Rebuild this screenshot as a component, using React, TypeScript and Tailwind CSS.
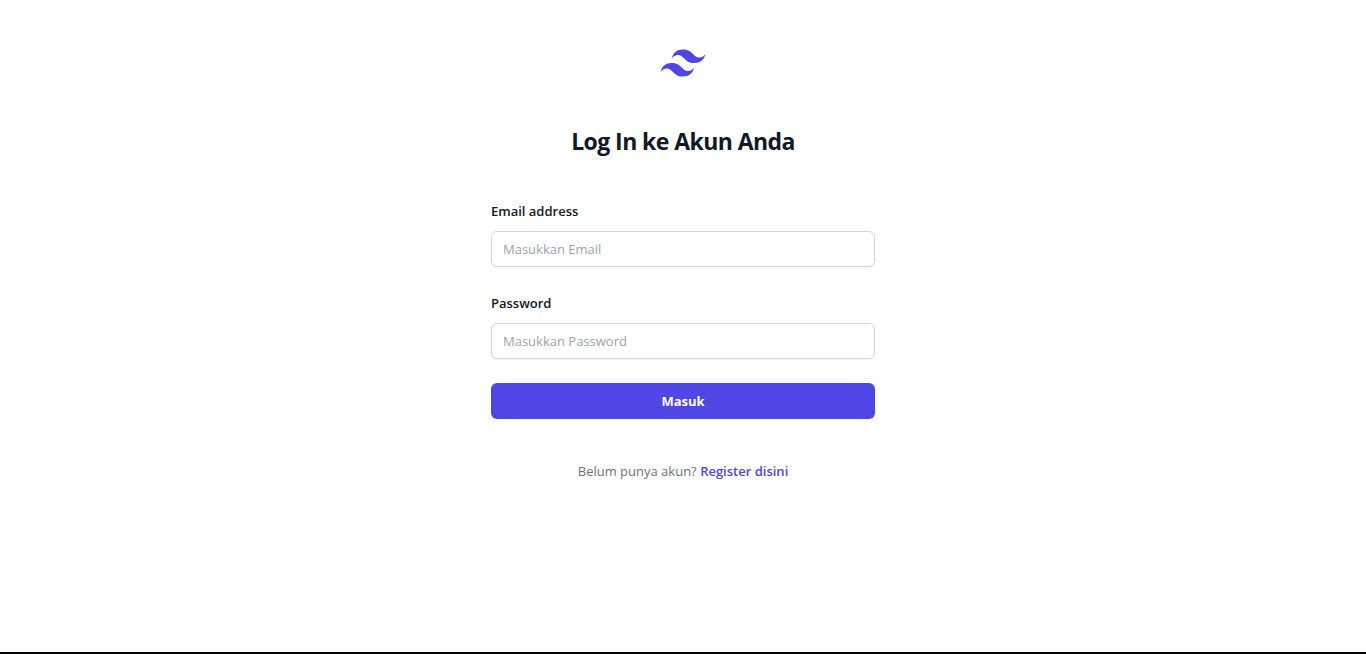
import React from 'react';

type FieldProps = { id: string; label: string; type: string; placeholder: string };

function Field({ id, label, type, placeholder }: FieldProps) {
  return (
    <div>
      <label htmlFor={id} className="block text-[13px] leading-6 font-semibold text-[#111827]">
        {label}
      </label>
      <input
        id={id}
        name={id}
        type={type}
        placeholder={placeholder}
        className="mt-2 block h-9 w-full rounded-md border border-[#d1d5db] bg-white px-[11px] text-[13px] text-[#111827] shadow-xs placeholder:text-[#9ca3af] focus:outline-2 focus:outline-[#4f46e5]"
      />
    </div>
  );
}

export default function App() {
  return (
    <div className="flex min-h-screen flex-col border-b-2 border-black bg-white font-['Open_Sans','Noto_Sans',sans-serif]">
      <main className="flex flex-1 flex-col px-6 pt-[43px] pb-10">
        <svg viewBox="-3 -7.8 60 48" className="mx-auto h-10 w-auto" fill="#4f46e5" aria-hidden="true">
          <path
            fillRule="evenodd"
            clipRule="evenodd"
            d="M27 0c-7.200 0-11.700 3.600-13.500 10.800 2.700-3.600 5.850-4.950 9.450-4.050 2.054.513 3.522 2.004 5.147 3.653C30.744 13.090 33.808 16.200 40.500 16.200c7.200 0 11.700-3.600 13.500-10.800-2.700 3.600-5.850 4.950-9.450 4.050-2.054-.513-3.522-2.004-5.147-3.653C36.756 3.110 33.692 0 27 0zM13.500 16.200C6.300 16.200 1.800 19.800 0 27c2.700-3.600 5.850-4.950 9.450-4.050 2.054.514 3.522 2.004 5.147 3.653C17.244 29.290 20.308 32.400 27 32.400c7.200 0 11.700-3.600 13.500-10.800-2.700 3.600-5.850 4.950-9.450 4.050-2.054-.513-3.522-2.004-5.147-3.653C23.256 19.310 20.192 16.200 13.500 16.200z"
          />
        </svg>
        <h1 className="mt-10 text-center text-[23px] leading-9 font-bold tracking-tight text-[#111827]">
          Log In ke Akun Anda
        </h1>
        <div className="mx-auto mt-10 w-full max-w-96">
          <form className="space-y-6" onSubmit={(e) => e.preventDefault()}>
            <Field id="email" label="Email address" type="email" placeholder="Masukkan Email" />
            <Field id="password" label="Password" type="password" placeholder="Masukkan Password" />
            <button
              type="submit"
              className="flex h-9 w-full items-center justify-center rounded-md bg-[#4f46e5] text-[13px] leading-6 font-bold text-white shadow-xs hover:bg-indigo-500"
            >
              Masuk
            </button>
          </form>
          <p className="mt-10 text-center text-[13px] leading-6 text-[#6b7280]">
            Belum punya akun?{' '}
            <a href="#register" className="font-semibold text-[#4f46e5] hover:text-indigo-500">
              Register disini
            </a>
          </p>
        </div>
      </main>
    </div>
  );
}
